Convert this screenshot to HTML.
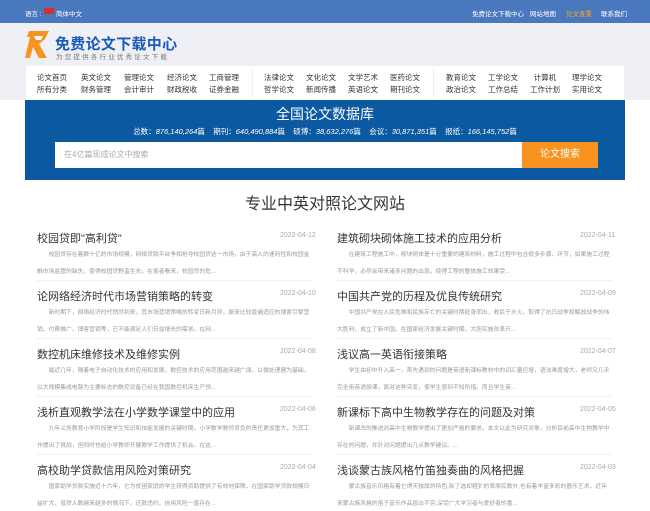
<!DOCTYPE html>
<html><head><meta charset="utf-8"><style>
*{margin:0;padding:0;box-sizing:border-box}
body{width:650px;height:500px;overflow:hidden;background:#fff;font-family:"Liberation Sans","Noto Sans CJK SC",sans-serif;position:relative}
.abs{position:absolute;white-space:nowrap}
#top{position:absolute;left:0;top:0;width:650px;height:23px;background:#4a78be;color:#fff;font-size:6.5px}
#hdr{position:absolute;left:0;top:23px;width:650px;height:77px;background:#eef0f6}
#nav{position:absolute;left:26px;top:66px;width:598px;height:34px;background:#fff}
.n{position:absolute;font-size:7.5px;color:#333;white-space:nowrap;transform:translateX(-50%)}
#ban{position:absolute;left:25px;top:100px;width:600px;height:80px;background:#0b5aa1}
.t{position:absolute;font-size:11px;color:#333;white-space:nowrap}
.d{position:absolute;font-size:7px;color:#aaa;white-space:nowrap}
.s{position:absolute;font-size:5.8px;color:#999;line-height:17px;width:275px;overflow:hidden;height:34px;padding-top:2px}
.hr{position:absolute;height:1px;background:#f0f0f0;width:275px}
</style></head><body>
<div id="top">
 <span class="abs" style="left:25px;top:8px">语言 :</span>
 <span class="abs" style="left:44px;top:8px;width:10px;height:6px;background:#d9302a"></span>
 <span class="abs" style="left:56px;top:8px">简体中文</span>
 <span class="abs" style="left:472px;top:8px">免费论文下载中心</span>
 <span class="abs" style="left:530px;top:8px">网站地图</span>
 <span class="abs" style="left:566px;top:8px;color:#f5a623">论文查重</span>
 <span class="abs" style="left:601px;top:8px">联系我们</span>
</div>
<div id="hdr"></div>
<svg class="abs" style="left:25px;top:31px" width="26" height="28" viewBox="0 0 26 28">
<path d="M4 0H24L20 8L14 13L22 27H14L8 16L5 27H0L5 6H2Z" fill="#f7931e"/>
<path d="M9 5H18L16 9H11Z" fill="#fff"/>
</svg>
<span class="abs" style="left:55px;top:33px;font-size:15px;font-weight:bold;color:#1a5bb8;letter-spacing:0.3px">免费论文下载中心</span>
<span class="abs" style="left:56px;top:51px;font-size:6.5px;color:#777;letter-spacing:2.2px">为您提供各行业优秀论文下载</span>
<div id="nav">
 <div style="position:absolute;left:226px;top:3px;width:1px;height:28px;background:#eee"></div>
 <div style="position:absolute;left:407px;top:3px;width:1px;height:28px;background:#eee"></div>
</div>
<div class="n" style="left:52px;top:72px">论文首页</div><div class="n" style="left:52px;top:84px">所有分类</div>
<div class="n" style="left:96px;top:72px">英文论文</div><div class="n" style="left:96px;top:84px">财务管理</div>
<div class="n" style="left:139px;top:72px">管理论文</div><div class="n" style="left:139px;top:84px">会计审计</div>
<div class="n" style="left:182px;top:72px">经济论文</div><div class="n" style="left:182px;top:84px">财政税收</div>
<div class="n" style="left:224px;top:72px">工商管理</div><div class="n" style="left:224px;top:84px">证券金融</div>
<div class="n" style="left:279px;top:72px">法律论文</div><div class="n" style="left:279px;top:84px">哲学论文</div>
<div class="n" style="left:321px;top:72px">文化论文</div><div class="n" style="left:321px;top:84px">新闻传播</div>
<div class="n" style="left:363px;top:72px">文学艺术</div><div class="n" style="left:363px;top:84px">英语论文</div>
<div class="n" style="left:405px;top:72px">医药论文</div><div class="n" style="left:405px;top:84px">期刊论文</div>
<div class="n" style="left:461px;top:72px">教育论文</div><div class="n" style="left:461px;top:84px">政治论文</div>
<div class="n" style="left:503px;top:72px">工学论文</div><div class="n" style="left:503px;top:84px">工作总结</div>
<div class="n" style="left:545px;top:72px">计算机</div><div class="n" style="left:545px;top:84px">工作计划</div>
<div class="n" style="left:587px;top:72px">理学论文</div><div class="n" style="left:587px;top:84px">实用论文</div>
<div id="ban"></div>
<span class="abs" style="left:0;width:650px;text-align:center;top:104px;font-size:14px;color:#fff">全国论文数据库</span>
<span class="abs" style="left:0;width:650px;text-align:center;top:126px;font-size:7.5px;color:#fff">总数：<i>876,140,264</i>篇 &nbsp;&nbsp; 期刊：<i>640,490,884</i>篇 &nbsp;&nbsp; 硕博：<i>38,632,276</i>篇 &nbsp;&nbsp; 会议：<i>30,871,351</i>篇 &nbsp;&nbsp; 报纸：<i>166,145,752</i>篇</span>
<div class="abs" style="left:55px;top:142px;width:467px;height:26px;background:#fff"></div>
<span class="abs" style="left:64px;top:142px;line-height:26px;font-size:8px;color:#aaa">在4亿篇现成论文中搜索</span>
<div class="abs" style="left:522px;top:142px;width:76px;height:26px;background:#f7931e;color:#fff;font-size:10px;text-align:center;line-height:26px">论文搜索</div>
<span class="abs" style="left:0;width:650px;text-align:center;top:190px;font-size:16px;color:#333">专业中英对照论文网站</span>

<div class="t" style="left:37px;top:230px">校园贷即"高利贷"</div><div class="d" style="left:280px;top:232px">2022-04-12</div>
<div class="s" style="left:37px;top:245px">&emsp;&emsp;校园贷存在着数十亿的市场规模，网络贷款平台争相抢夺校园贷这一市场，由于高人的速利性和校园金融市场监管的缺失，使得校园贷野蛮生长。在笔者看来，校园贷的危...</div>
<div class="hr" style="left:37px;top:280px"></div>
<div class="t" style="left:337px;top:230px">建筑砌块砌体施工技术的应用分析</div><div class="d" style="left:580px;top:232px">2022-04-11</div>
<div class="s" style="left:337px;top:245px">&emsp;&emsp;在建筑工程施工中，砌块砌体是十分重要的建筑材料，施工过程中包含很多步骤、环节，如果施工过程不科学，必然会带来诸多问题的出现，使得工程的整体施工效果受...</div>
<div class="hr" style="left:337px;top:280px"></div>

<div class="t" style="left:37px;top:288px">论网络经济时代市场营销策略的转变</div><div class="d" style="left:280px;top:290px">2022-04-10</div>
<div class="s" style="left:37px;top:303px">&emsp;&emsp;新时期下，网络经济时代悄然到来，其市场营销策略的转变日新月异，原来比较普遍适应的搜索引擎营销、付费推广、博客营销等，已不能满足人们日益增长的需求。在网...</div>
<div class="hr" style="left:37px;top:338px"></div>
<div class="t" style="left:337px;top:288px">中国共产党的历程及优良传统研究</div><div class="d" style="left:580px;top:290px">2022-04-09</div>
<div class="s" style="left:337px;top:303px">&emsp;&emsp;中国共产党在人民危难和民族存亡的关键时期挺身而出，救民于水火，取得了抗日战争和解放战争的伟大胜利，成立了新中国。在国家经济发展关键时期，大胆实施改革开...</div>
<div class="hr" style="left:337px;top:338px"></div>

<div class="t" style="left:37px;top:346px">数控机床维修技术及维修实例</div><div class="d" style="left:280px;top:348px">2022-04-08</div>
<div class="s" style="left:37px;top:361px">&emsp;&emsp;最近几年，随着电子自动化技术的应用和发展，数控技术的应用范围越来越广阔，以微处理器为基础，以大规模集成电路为主要标志的数控设备已经在我国数控机床生产领...</div>
<div class="hr" style="left:37px;top:396px"></div>
<div class="t" style="left:337px;top:346px">浅议高一英语衔接策略</div><div class="d" style="left:580px;top:348px">2022-04-07</div>
<div class="s" style="left:337px;top:361px">&emsp;&emsp;学生由初中升入高一，首先遇到的问题是英语新课标教材中的词汇量巨增，语法难度增大，老师又几乎完全用英语授课，面对这种突变，使学生感到不知所措。而且学生英...</div>
<div class="hr" style="left:337px;top:396px"></div>

<div class="t" style="left:37px;top:404px">浅析直观教学法在小学数学课堂中的应用</div><div class="d" style="left:280px;top:406px">2022-04-06</div>
<div class="s" style="left:37px;top:419px">&emsp;&emsp;九年义务教育小学阶段是学生知识和技能发展的关键时期，小学数学教师背负的责任更加重大，为其工作提出了挑战，但同时也给小学教师开展教学工作提供了机会。在这...</div>
<div class="hr" style="left:37px;top:454px"></div>
<div class="t" style="left:337px;top:404px">新课标下高中生物教学存在的问题及对策</div><div class="d" style="left:580px;top:406px">2022-04-05</div>
<div class="s" style="left:337px;top:419px">&emsp;&emsp;新课改的推进对高中生物教学提出了更加严格的要求。本文以此为研究对象，分析目前高中生物教学中存在的问题，并针对问题提出几点教学建议。...</div>
<div class="hr" style="left:337px;top:454px"></div>

<div class="t" style="left:37px;top:462px">高校助学贷款信用风险对策研究</div><div class="d" style="left:280px;top:464px">2022-04-04</div>
<div class="s" style="left:37px;top:477px">&emsp;&emsp;国家助学贷款实施近十六年，它为贫困家庭的学生获得资助提供了有效地保障。在国家助学贷款规模日益扩大，借贷人数越来越多的情况下，还款违约、信用风险一直存在...</div>
<div class="t" style="left:337px;top:462px">浅谈蒙古族风格竹笛独奏曲的风格把握</div><div class="d" style="left:580px;top:464px">2022-04-03</div>
<div class="s" style="left:337px;top:477px">&emsp;&emsp;蒙古族音乐风格有着它得天独厚的特色,除了选却粗犷的草原民歌外,也有着丰富多彩的器乐艺术。近年来蒙古族风格的笛子音乐作品层出不穷,深受广大学习者与爱好者的喜...</div>
</body></html>
